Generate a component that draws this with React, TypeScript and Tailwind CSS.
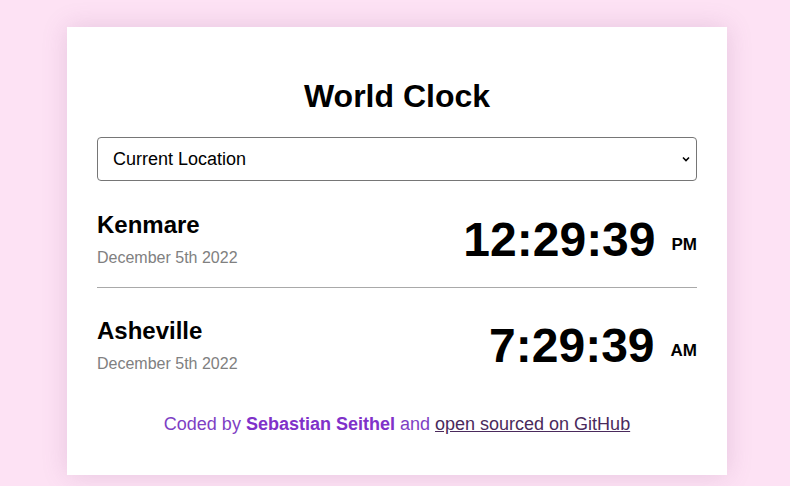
import React from 'react';

interface CityRowProps {
    name: string;
    date: string;
    time: string;
    period: string;
}

function CityRow({ name, date, time, period }: CityRowProps) {
    return (
        <div className="flex items-center justify-between">
            <div>
                <h2 className="text-[24px] font-bold leading-[28px] text-black">{name}</h2>
                <div className="mt-[9px] text-[16px] leading-[20px] text-[#808080]">{date}</div>
            </div>
            <div className="flex items-baseline">
                <span className="text-[48px] font-bold leading-none text-black">{time}</span>
                <span className="relative -top-[6px] ml-[16px] text-[17px] font-bold text-black">{period}</span>
            </div>
        </div>
    );
}

export default function App() {
    return (
        <div className="min-h-[486px] bg-[#fde2f4] pt-[27px] font-['Liberation_Sans',Arial,sans-serif]">
            <div className="ml-[67px] w-[660px] bg-white px-[30px] pt-[50px] pb-[40px] shadow-[0_0_24px_rgba(140,80,140,0.2)]">
                {/* Header */}
                <h1 className="text-center text-[32px] font-bold leading-[38px] text-black">
                    World Clock
                </h1>

                <div className="relative mt-[22px]">
                    <select className="h-[44px] w-full appearance-none rounded-[4px] border border-[#767676] bg-white pl-[15px] text-[18px] text-black">
                        <option>Current Location</option>
                    </select>
                    <svg
                        className="pointer-events-none absolute right-[6px] top-1/2 -translate-y-1/2"
                        width="10"
                        height="10"
                        viewBox="0 0 10 10"
                    >
                        <path d="M2 3.5 L5 6.5 L8 3.5" fill="none" stroke="#000" strokeWidth="1.6" />
                    </svg>
                </div>

                {/* Cities */}
                <div className="mt-[30px]">
                    <CityRow name="Kenmare" date="December 5th 2022" time="12:29:39" period="PM" />
                </div>
                <hr className="mt-[19px] mb-[29px] border-t border-[#a9a9a9]" />
                <CityRow name="Asheville" date="December 5th 2022" time="7:29:39" period="AM" />

                {/* Footer */}
                <div className="mt-[39px] text-center text-[18px] leading-[22px] text-[#7e3fc4]">
                    Coded by <span className="font-bold text-[#8031c9]">Sebastian Seithel</span> and{' '}
                    <a href="#" className="text-[#4a2a5c] underline">
                        open sourced on GitHub
                    </a>
                </div>
            </div>
        </div>
    );
}
